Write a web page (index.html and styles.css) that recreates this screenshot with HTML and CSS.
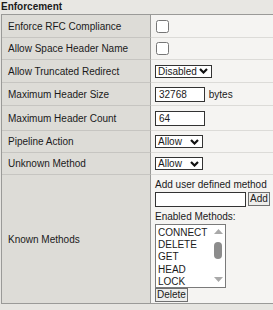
FILE: index.html
```html
<!DOCTYPE html>
<html lang="en">
<head>
    <meta charset="UTF-8">
    <title>Enforcement</title>
    <link rel="stylesheet" href="styles.css">
</head>
<body>
<div class="section-title">Enforcement</div>
<table class="settings">
    <tr class="h23">
        <td class="label">Enforce RFC Compliance</td>
        <td class="value"><input type="checkbox" class="check"></td>
    </tr>
    <tr class="h22">
        <td class="label">Allow Space Header Name</td>
        <td class="value"><input type="checkbox" class="check"></td>
    </tr>
    <tr class="h23">
        <td class="label">Allow Truncated Redirect</td>
        <td class="value">
            <span class="select w57">Disabled <svg class="chev" width="9" height="6" viewBox="0 0 9 6"><polyline points="1,1 4.5,4.5 8,1"/></svg></span>
        </td>
    </tr>
    <tr class="h23">
        <td class="label">Maximum Header Size</td>
        <td class="value"><span class="field w50">32768</span> <span class="unit">bytes</span></td>
    </tr>
    <tr class="h25">
        <td class="label">Maximum Header Count</td>
        <td class="value"><span class="field w50">64</span></td>
    </tr>
    <tr class="h22">
        <td class="label">Pipeline Action</td>
        <td class="value">
            <span class="select w48">Allow <svg class="chev" width="9" height="6" viewBox="0 0 9 6"><polyline points="1,1 4.5,4.5 8,1"/></svg></span>
        </td>
    </tr>
    <tr class="h22">
        <td class="label">Unknown Method</td>
        <td class="value">
            <span class="select w48">Allow <svg class="chev" width="9" height="6" viewBox="0 0 9 6"><polyline points="1,1 4.5,4.5 8,1"/></svg></span>
        </td>
    </tr>
    <tr class="h129 last">
        <td class="label">Known Methods</td>
        <td class="value methods">
            <div class="caption">Add user defined method</div>
            <div class="add-row">
                <span class="field w90"></span>
                <button class="btn">Add</button>
            </div>
            <div class="caption">Enabled Methods:</div>
            <div class="listbox">
                <div class="items">
                    <div>CONNECT</div>
                    <div>DELETE</div>
                    <div>GET</div>
                    <div>HEAD</div>
                    <div>LOCK</div>
                </div>
                <div class="scrollbar">
                    <svg width="9" height="5" viewBox="0 0 9 5"><polygon points="0,5 4.5,0 9,5"/></svg>
                    <div class="thumb"></div>
                    <svg width="9" height="5" viewBox="0 0 9 5"><polygon points="0,0 4.5,5 9,0"/></svg>
                </div>
            </div>
            <button class="btn">Delete</button>
        </td>
    </tr>
</table>
</body>
</html>
```

FILE: styles.css
```css
body {
    margin: 0;
    background: #e6e5e1;
    font-family: "Liberation Sans", Arial, sans-serif;
    font-size: 10px;
    color: #1a1a1a;
}
.section-title {
    height: 14px;
    line-height: 13px;
    padding-left: 1px;
    font-weight: bold;
    font-size: 10px;
    background: #e8e7e3;
}
.settings {
    margin-left: 1px;
    width: 272px;
    border-collapse: separate;
    border-spacing: 0;
    border-top: 1px solid #9a9a98;
    border-left: 1px solid #9a9a98;
    border-bottom: 1px solid #9a9a98;
}
.settings td {
    padding: 0;
    vertical-align: middle;
    box-sizing: border-box;
}
.label {
    width: 149px;
    padding-left: 6px !important;
    background: #dddcd7;
    border-right: 1px solid #9a9a98;
    border-bottom: 1px solid #c6c5c1;
}
.value {
    padding-left: 4px !important;
    background: #f5f4f2;
    border-bottom: 1px solid #dcdbd8;
}
.last td { border-bottom: none; }
.h22 td { height: 22px; }
.h23 td { height: 23px; }
.h25 td { height: 25px; }
.h129 td { height: 128px; }

.check {
    margin: 0 0 0 1px;
    width: 13px;
    height: 13px;
    vertical-align: middle;
}
.select {
    display: inline-flex;
    align-items: center;
    justify-content: space-between;
    box-sizing: border-box;
    height: 13px;
    padding: 0 3px 0 2px;
    border: 1px solid #333;
    background: #fff;
    vertical-align: middle;
    line-height: 11px;
}
.w57 { width: 57px; }
.w48 { width: 48px; }
.chev polyline {
    fill: none;
    stroke: #111;
    stroke-width: 2.2;
}
.field {
    display: inline-block;
    box-sizing: border-box;
    height: 15px;
    line-height: 13px;
    padding-left: 3px;
    border: 1px solid #333;
    background: #fff;
    vertical-align: middle;
}
.w50 { width: 50px; }
.w90 { width: 91px; }
.unit { vertical-align: middle; margin-left: 1px; }

.methods { padding-top: 1px !important; }
.caption { line-height: 13px; }
.add-row {
    display: flex;
    align-items: center;
    gap: 2px;
    margin: 1px 0 3px;
}
.btn {
    height: 14px;
    padding: 0 1px;
    font-family: "Liberation Sans", Arial, sans-serif;
    font-size: 10px;
    line-height: 12px;
    color: #1a1a1a;
    background: #ededeb;
    border: 1px solid #707070;
    border-radius: 0;
}
.listbox {
    display: flex;
    width: 71px;
    height: 64px;
    box-sizing: border-box;
    border: 1px solid #7a7a7a;
    background: #fff;
    margin-top: 1px;
}
.items {
    flex: 1;
    padding: 2px 0 0 2px;
    line-height: 12.4px;
    overflow: hidden;
}
.scrollbar {
    width: 14px;
    display: flex;
    flex-direction: column;
    align-items: center;
    justify-content: space-between;
    padding: 4px 0 5px;
    box-sizing: border-box;
}
.scrollbar polygon { fill: #a9a9a9; }
.thumb {
    width: 8px;
    height: 17px;
    border-radius: 4px;
    background: #8c8c8c;
    margin: -4px 0 6px;
}
```
